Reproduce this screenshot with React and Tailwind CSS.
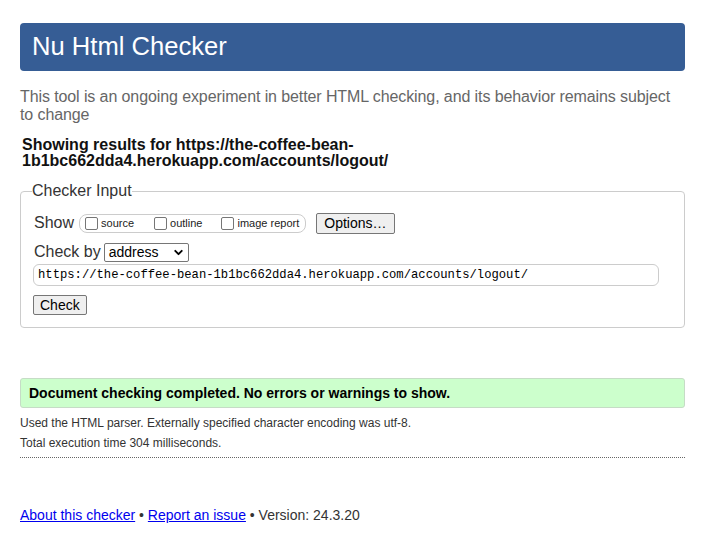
import { ChevronDown } from 'lucide-react'

const URL = 'https://the-coffee-bean-1b1bc662dda4.herokuapp.com/accounts/logout/'

function Box({ label, className }) {
  return (
    <span className={`flex items-center ${className||''}`}>
      <span className="w-[13px] h-[13px] border border-[#767676] rounded-[2px] bg-white"/>
      <span className="ml-[3px] text-[11px] leading-[13px] text-[#222]">{label}</span>
    </span>
  )
}

export default function App() {
  return (
    <div className="min-h-[551px] bg-white pl-5 pr-[17px] pt-[23px] font-['Liberation_Sans',Arial,sans-serif] text-[#222]">
      <div className="h-[48px] bg-[#365d95] rounded-[4px] flex items-center px-[12px]">
        <h1 className="text-white text-[25.6px] leading-none">Nu Html Checker</h1>
      </div>

      <p className="mt-[17px] text-[16px] leading-[18px] text-[#666] tracking-[-0.1px]">
        This tool is an ongoing experiment in better HTML checking, and its behavior remains subject to change
      </p>

      <p className="mt-[13px] pl-[2px] text-[16px] leading-[16px] font-bold text-[#111] w-[420px]">
        Showing results for https://the-coffee-bean-<br/>1b1bc662dda4.herokuapp.com/accounts/logout/
      </p>

      <fieldset className="mt-[13px] border border-[#ccc] rounded-[4px] px-[12px] pb-[10px]">
        <legend className="-ml-px text-[16px] leading-[18px] text-[#333]">Checker Input</legend>

        <div className="mt-[12px] flex items-center h-[22px] pl-px">
          <span className="text-[16px] text-[#333]">Show</span>
          <div className="ml-[5px] h-[19px] border border-[#ccc] rounded-[8px] flex items-center pl-[5px] pr-[6px]">
            <Box label="source"/>
            <Box label="outline" className="ml-[20px]"/>
            <Box label="image report" className="ml-[19px]"/>
          </div>
          <button className="ml-[10px] h-[21px] px-[7px] bg-[#efefef] border border-[#767676] rounded-[2px] text-[14px] leading-none text-black">Options…</button>
        </div>

        <div className="mt-[8px] flex items-center h-[20px] pl-px">
          <span className="text-[16px] text-[#333]">Check by</span>
          <div className="ml-[3px] w-[85px] h-[19px] border border-[#767676] rounded-[2px] bg-white flex items-center justify-between pl-[4px] pr-[3px]">
            <span className="text-[14px] leading-none text-black">address</span>
            <ChevronDown size={13} strokeWidth={3.5} className="text-black"/>
          </div>
        </div>

        <div className="mt-[2px] w-[626px] h-[22px] border border-[#ccc] rounded-[6px] flex items-center pl-[4px] font-['Liberation_Mono',monospace] text-[12.2px] text-black">
          {URL}
        </div>

        <button className="mt-[9px] h-[20px] px-[6px] bg-[#efefef] border border-[#767676] rounded-[2px] text-[14px] leading-none text-black">Check</button>
      </fieldset>

      <div className="mt-[50px] h-[30px] bg-[#ccffcc] border border-[#c6dcc6] rounded-[3px] flex items-center px-[8px]">
        <span className="text-[14px] font-bold text-black">Document checking completed. No errors or warnings to show.</span>
      </div>

      <p className="mt-[5px] text-[12px] leading-[20px] text-[#333]">Used the HTML parser. Externally specified character encoding was utf-8.</p>
      <p className="text-[12px] leading-[20px] text-[#333]">Total execution time 304 milliseconds.</p>
      <div className="mt-[4px] border-b border-dotted border-[#666]"/>

      <p className="mt-[47px] text-[14px] leading-[20px] text-[#333]">
        <a href="#" className="text-[#0000ee] underline">About this checker</a>
        {' • '}
        <a href="#" className="text-[#0000ee] underline">Report an issue</a>
        {' • Version: 24.3.20'}
      </p>
    </div>
  )
}
